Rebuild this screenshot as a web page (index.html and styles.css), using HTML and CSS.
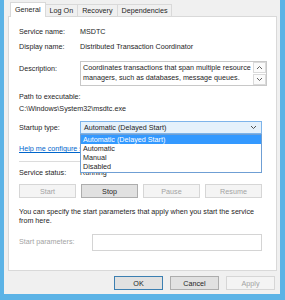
FILE: index.html
```html
<!DOCTYPE html>
<html lang="en">
    <head>
        <meta charset="UTF-8">
        <title>MSDTC Properties</title>
        <link rel="stylesheet" href="styles.css">
    </head>
    <body>
        <div class="window">
            <div class="tabs">
                <span class="tab active">General</span>
                <span class="tab">Log On</span>
                <span class="tab">Recovery</span>
                <span class="tab">Dependencies</span>
            </div>

            <div class="panel">
                <div class="field">
                    <span class="label">Service name:</span>
                    <span>MSDTC</span>
                </div>
                <div class="field gap5">
                    <span class="label">Display name:</span>
                    <span>Distributed Transaction Coordinator</span>
                </div>
                <div class="field desc-row">
                    <span class="label desc-label">Description:</span>
                    <div class="desc-box">
                        <p class="desc-text">Coordinates transactions that span multiple resource<br>managers, such as databases, message queues.</p>
                        <div class="scroll">
                            <span class="scroll-btn">
                                <svg width="7" height="5" viewBox="0 0 7 5"><path d="M1 4 L3.5 1.5 L6 4" fill="none" stroke="#606060" stroke-width="1"/></svg>
                            </span>
                            <span class="scroll-btn">
                                <svg width="7" height="5" viewBox="0 0 7 5"><path d="M1 1 L3.5 3.5 L6 1" fill="none" stroke="#606060" stroke-width="1"/></svg>
                            </span>
                        </div>
                    </div>
                </div>
                <p class="line path-label">Path to executable:</p>
                <p class="line path-value">C:\Windows\System32\msdtc.exe</p>

                <div class="field startup-row">
                    <span class="label">Startup type:</span>
                    <div class="combo">
                        <span>Automatic (Delayed Start)</span>
                        <svg width="7" height="5" viewBox="0 0 7 5"><path d="M1 1 L3.5 3.5 L6 1" fill="none" stroke="#505050" stroke-width="1"/></svg>
                        <ul class="dropdown">
                            <li class="selected">Automatic (Delayed Start)</li>
                            <li>Automatic</li>
                            <li>Manual</li>
                            <li>Disabled</li>
                        </ul>
                    </div>
                </div>

                <a class="help" href="#">Help me configure service startup options.</a>
                <div class="separator"></div>

                <div class="field status-row">
                    <span class="label">Service status:</span>
                    <span>Running</span>
                </div>

                <div class="service-buttons">
                    <button class="btn" disabled>Start</button>
                    <button class="btn">Stop</button>
                    <button class="btn" disabled>Pause</button>
                    <button class="btn" disabled>Resume</button>
                </div>

                <p class="hint">You can specify the start parameters that apply when you start the service<br>from here.</p>

                <div class="field params-row">
                    <span class="label params-label">Start parameters:</span>
                    <span class="params-input"></span>
                </div>
            </div>

            <div class="footer">
                <button class="btn dialog-btn default">OK</button>
                <button class="btn dialog-btn">Cancel</button>
                <button class="btn dialog-btn" disabled>Apply</button>
            </div>
        </div>
    </body>
</html>
```

FILE: styles.css
```css
*{
    margin: 0;
    padding: 0;
    box-sizing: border-box;
}

body{
    height: 300px;
    overflow: hidden;
    background-color: #5cb3e6;
    font-family: "Liberation Sans", Arial, sans-serif;
    font-size: 7.2px;
    color: #1e1e1e;
}

.window{
    display: flex;
    flex-direction: column;
    height: 294px;
    margin: 0 5px 0 4px;
    padding: 2px 3px 0 4px;
    background-color: #f0f0f0;
}

/* tab strip */
.tabs{
    display: flex;
    align-items: flex-end;
    height: 14px;
    padding-left: 2px;
    position: relative;
    z-index: 1;
}

.tab{
    height: 12px;
    line-height: 11px;
    padding: 0 4px;
    margin-left: -1px;
    border: 1px solid #d9d9d9;
    border-bottom: none;
    background-color: #f0f0f0;
}

.tab.active{
    height: 15px;
    line-height: 13px;
    margin-left: 0;
    margin-bottom: -1px;
    background-color: #fff;
}

.panel{
    display: flex;
    flex-direction: column;
    height: 255px;
    padding: 10px 14px 0 10px;
    border: 1px solid #d9d9d9;
    background-color: #fff;
}

.field{
    display: flex;
    line-height: 10px;
}

.label{
    width: 61px;
    flex: none;
}

.gap5{
    margin-top: 5px;
}

/* description */
.desc-row{
    margin-top: 9px;
    height: 25px;
}

.desc-label{
    padding-top: 3px;
}

.desc-box{
    display: flex;
    flex: 1;
    border: 1px solid #c8c8c8;
}

.desc-text{
    flex: 1;
    padding: 1px 2px;
    line-height: 10px;
    white-space: nowrap;
    overflow: hidden;
}

.scroll{
    display: flex;
    flex-direction: column;
    width: 13px;
    gap: 1px;
}

.scroll-btn{
    display: flex;
    align-items: center;
    justify-content: center;
    flex: 1;
    border: 1px solid #dadada;
    background-color: #fbfbfb;
}

.line{
    line-height: 10px;
}

.path-label{
    margin-top: 6px;
}

.path-value{
    margin-top: 2px;
}

/* startup type combo */
.startup-row{
    margin-top: 7px;
    height: 13px;
    align-items: center;
}

.combo{
    position: relative;
    display: flex;
    align-items: center;
    justify-content: space-between;
    flex: 1;
    height: 13px;
    padding: 0 4px 0 3px;
    border: 1px solid #7eb4ea;
    background-color: #e5f1fb;
}

.dropdown{
    position: absolute;
    top: 12px;
    left: -1px;
    right: -1px;
    height: 39px;
    list-style: none;
    border: 1px solid #6f9fd4;
    background-color: #fff;
    z-index: 2;
}

.dropdown li{
    height: 9px;
    line-height: 9px;
    padding-left: 2px;
}

.dropdown li.selected{
    background-color: #3399ff;
    color: #fff;
}

.help{
    margin-top: 10px;
    line-height: 10px;
    color: #0066cc;
    white-space: nowrap;
}

.separator{
    margin-top: 7px;
    border-top: 1px solid #dcdcdc;
}

.status-row{
    margin-top: 6px;
}

/* buttons */
.service-buttons{
    display: flex;
    gap: 5px;
    margin-top: 6px;
}

.btn{
    height: 14px;
    width: 57px;
    font-family: inherit;
    font-size: 7.2px;
    color: #1e1e1e;
    border: 1px solid #adadad;
    background-color: #e1e1e1;
}

.btn:disabled{
    color: #a3a3a3;
    border-color: #d6d6d6;
    background-color: #f4f4f4;
}

.hint{
    margin-top: 9px;
    line-height: 9px;
}

.params-row{
    margin-top: 8px;
    height: 18px;
    align-items: center;
}

.params-label{
    width: 73px;
    color: #a3a3a3;
}

.params-input{
    flex: 1;
    height: 17px;
    border: 1px solid #d4d4d4;
}

.footer{
    display: flex;
    justify-content: flex-end;
    gap: 7px;
    padding: 5px 2px 0 0;
}

.dialog-btn{
    width: 49px;
}

.dialog-btn.default{
    border-color: #3c7fb1;
}
```
